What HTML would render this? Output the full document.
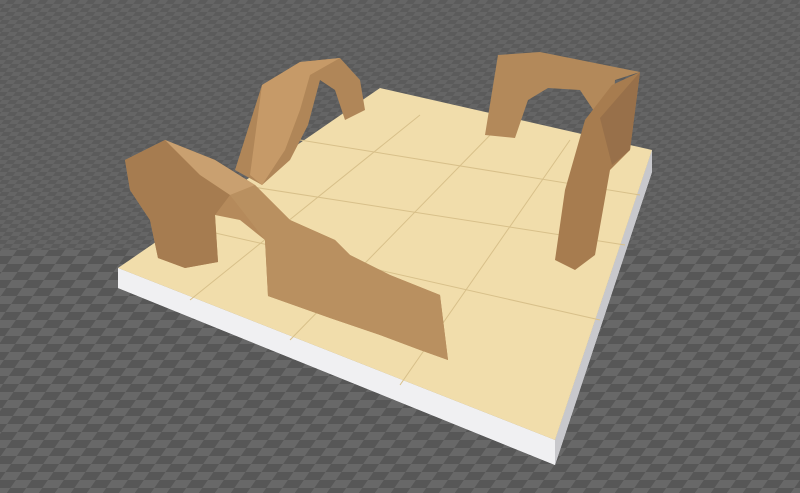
<!DOCTYPE html>
<html><head><style>html,body{margin:0;padding:0;width:800px;height:493px;overflow:hidden;background:#5e5e5e}</style></head>
<body>
<svg width="800" height="493" viewBox="0 0 800 493" xmlns="http://www.w3.org/2000/svg">
<defs>
<pattern id="ck" width="16" height="8" patternUnits="userSpaceOnUse" patternTransform="skewX(-35)">
<rect width="16" height="8" fill="#5b5b5b"/>
<rect width="8" height="4" fill="#656565"/>
<rect x="8" y="4" width="8" height="4" fill="#656565"/>
</pattern>
<pattern id="ck2" width="32" height="16" patternUnits="userSpaceOnUse" patternTransform="skewX(-35)">
<rect width="32" height="16" fill="#575757"/>
<rect width="16" height="8" fill="#686868"/>
<rect x="16" y="8" width="16" height="8" fill="#686868"/>
</pattern>
</defs>
<rect width="800" height="250" fill="url(#ck)"/>
<rect y="250" width="800" height="243" fill="url(#ck2)"/>
<polygon points="118,268 555,440 652,150 652,172 555,465 118,288" fill="#e8e8ec"/>
<polygon points="118,268 555,440 555,465 118,288" fill="#f0f0f2"/>
<polygon points="555,440 652,150 652,172 555,465" fill="#c8c8cc"/>
<polygon points="118,268 380,88 652,150 555,440" fill="#f1ddab"/>
<g stroke="#d8c08a" stroke-width="1" fill="none">
<line x1="180" y1="225" x2="600" y2="320"/><line x1="240" y1="185" x2="625" y2="245"/>
<line x1="300" y1="140" x2="640" y2="195"/><line x1="190" y1="300" x2="420" y2="115"/>
<line x1="290" y1="340" x2="495" y2="130"/><line x1="400" y1="385" x2="570" y2="140"/>
</g>
<polygon points="235,170 262,85 300,62 340,58 360,80 365,110 345,120 335,90 320,80 308,125 290,160 262,185" fill="#b08658"/>
<polygon points="262,85 300,62 340,58 310,75 300,110 285,150 262,185 250,175" fill="#c69a68"/>
<polygon points="125,160 165,140 215,160 255,185 290,220 335,240 350,255 390,275 440,295 448,360 420,350 380,335 330,318 268,296 265,240 240,220 215,215 218,262 185,268 158,258 150,220 130,190" fill="#b58a5b"/>
<polygon points="125,160 165,140 215,160 230,195 215,215 218,262 185,268 158,258 150,220 130,190" fill="#a67c50"/>
<polygon points="230,195 255,185 290,220 335,240 350,255 390,275 440,295 448,360 420,350 380,335 330,318 268,296 265,240" fill="#b99060"/>
<polygon points="165,140 215,160 255,185 230,195 200,175" fill="#c9a070"/>
<polygon points="498,55 540,52 640,72 615,80 612,120 600,120 580,90 548,88 528,100 515,138 485,135 498,55" fill="#b3895a"/>
<polygon points="585,120 612,85 640,72 630,150 610,170 595,255 575,270 555,260 565,190" fill="#a77c4f"/>
<polygon points="600,118 640,72 630,150 612,165" fill="#98704a"/>
</svg>
</body></html>
